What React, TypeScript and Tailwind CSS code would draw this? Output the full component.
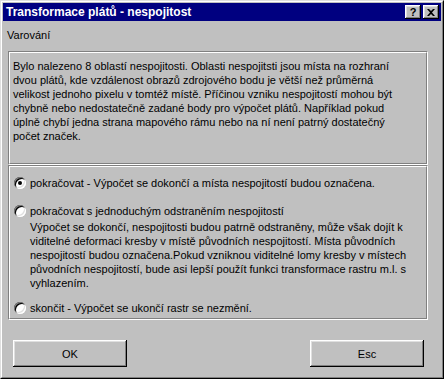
import React from 'react';

const infoLines = [
  'Bylo nalezeno 8 oblastí nespojitosti. Oblasti nespojitsti jsou místa na rozhraní',
  'dvou plátů, kde vzdálenost obrazů zdrojového bodu je větší než průměrná',
  'velikost jednoho pixelu v tomtéž místě. Příčinou vzniku nespojitostí mohou být',
  'chybně nebo nedostatečně zadané body pro výpočet plátů. Například pokud',
  'úplně chybí jedna strana mapového rámu nebo na ní není patrný dostatečný',
  'počet značek.',
];

const descLines = [
  'Výpočet se dokončí, nespojitosti budou patrně odstraněny, může však dojít k',
  'viditelné deformaci kresby v místě původních nespojitostí. Místa původních',
  'nespojitostí budou označena.Pokud vzniknou viditelné lomy kresby v místech',
  'původních nespojitostí, bude asi lepší použít funkci transformace rastru m.l. s',
  'vyhlazením.',
];

function Radio({ checked }: { checked?: boolean }) {
  return (
    <span className="relative inline-block w-[12px] h-[12px] shrink-0 rounded-full bg-white shadow-[inset_1px_1px_#808080,inset_-1px_-1px_#fff,inset_2px_2px_#000,inset_-2px_-2px_#dfdfdf]">
      {checked && (
        <span className="absolute left-[4px] top-[4px] w-[4px] h-[4px] rounded-full bg-black" />
      )}
    </span>
  );
}

function Etched({ className, children }: { className: string; children: React.ReactNode }) {
  return (
    <div className={`border border-t-[#808080] border-l-[#808080] border-b-white border-r-white ${className}`}>
      <div className="h-full border border-t-white border-l-white border-b-[#808080] border-r-[#808080]">
        {children}
      </div>
    </div>
  );
}

function Button({ label }: { label: string }) {
  return (
    <button className="w-[114px] h-[27px] bg-[#c0c0c0] text-black text-[11px] shadow-[inset_-1px_-1px_#000,inset_1px_1px_#fff,inset_-2px_-2px_#808080,inset_2px_2px_#dfdfdf]">
      {label}
    </button>
  );
}

function CaptionButton({ children }: { children: React.ReactNode }) {
  return (
    <span className="w-[16px] h-[14px] bg-[#c0c0c0] flex items-center justify-center text-black text-[11px] font-bold leading-none shadow-[inset_-1px_-1px_#000,inset_1px_1px_#fff,inset_-2px_-2px_#808080,inset_2px_2px_#dfdfdf]">
      {children}
    </span>
  );
}

export default function App() {
  return (
    <div className="w-[444px] h-[379px] bg-[#c0c0c0] font-['Liberation_Sans',Arial,sans-serif] text-black text-[11px] leading-[14px]">
      <div className="h-full border border-t-[#dfdfdf] border-l-[#dfdfdf] border-b-black border-r-black">
        <div className="h-full border border-t-white border-l-white border-b-[#808080] border-r-[#808080] p-px">
          {/* title bar */}
          <div className="h-[18px] bg-[#000080] flex items-center justify-between pl-[3px] pr-[2px]">
            <span className="text-white font-bold text-[12px] whitespace-nowrap">Transformace plátů - nespojitost</span>
            <div className="flex items-center gap-[2px]">
              <CaptionButton>?</CaptionButton>
              <CaptionButton>
                <svg width="8" height="7" viewBox="0 0 8 7">
                  <path d="M0 0h2l2 2 2-2h2L5 3.5 8 7H6L4 5 2 7H0l3-3.5z" fill="#000" />
                </svg>
              </CaptionButton>
            </div>
          </div>

          <div className="mt-[7px] pl-[4px]">Varování</div>

          <Etched className="mt-[9px] ml-[5px] w-[420px] h-[114px]">
            <div className="pt-[6px] pl-[3px] whitespace-nowrap">
              {infoLines.map((l) => (
                <div key={l}>{l}</div>
              ))}
            </div>
          </Etched>

          <Etched className="mt-0 ml-[5px] w-[420px] h-[155px]">
            <div className="pt-[9px] pl-[4px] whitespace-nowrap">
              <div className="flex items-center gap-[4px]">
                <Radio checked />
                <span>pokračovat - Výpočet se dokončí a místa nespojitostí budou označena.</span>
              </div>
              <div className="flex items-center gap-[4px] mt-[14px]">
                <Radio />
                <span>pokračovat s jednoduchým odstraněním nespojitostí</span>
              </div>
              <div className="pl-[16px] mt-[2px]">
                {descLines.map((l) => (
                  <div key={l}>{l}</div>
                ))}
              </div>
              <div className="flex items-center gap-[4px] mt-[11px]">
                <Radio />
                <span>skončit - Výpočet se ukončí rastr se nezmění.</span>
              </div>
            </div>
          </Etched>

          <div className="mt-[20px] pl-[10px] pr-[17px] flex justify-between">
            <Button label="OK" />
            <Button label="Esc" />
          </div>
        </div>
      </div>
    </div>
  );
}
